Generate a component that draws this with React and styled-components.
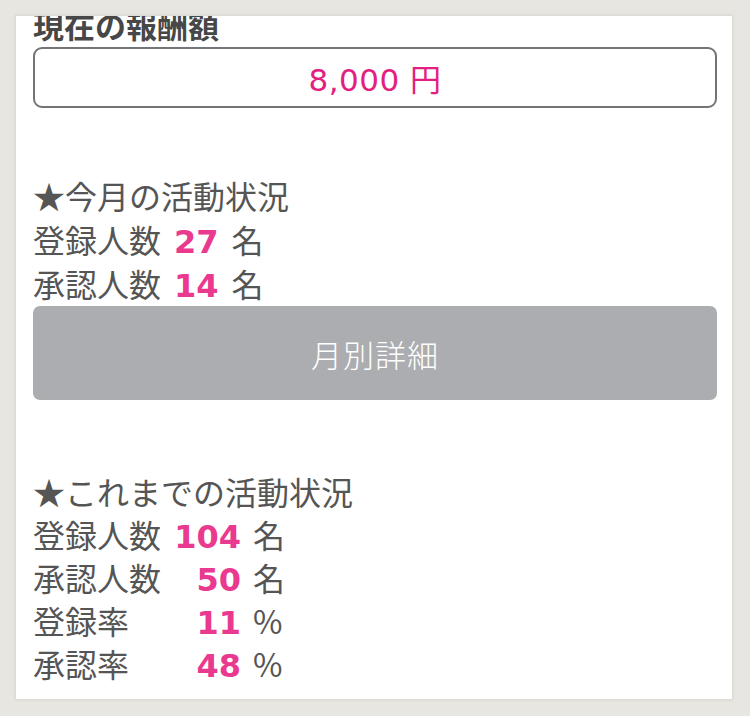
import styled, { createGlobalStyle } from 'styled-components';

const GlobalStyle = createGlobalStyle`
  html, body {
    margin: 0;
    padding: 0;
    background: #e7e6e1;
  }
  body {
    font-family: "Noto Sans CJK JP", "Noto Sans", sans-serif;
  }
`;

const Page = styled.div`
  padding: 15px 17px 16px 15px;
  height: 716px;
  box-sizing: border-box;
`;

const Card = styled.div`
  height: 685px;
  background: #fff;
  border: 1px solid #dedcd8;
  box-shadow: 0 0 3px rgba(0, 0, 0, 0.08);
  overflow: hidden;
  padding: 0 15px 0 17px;
  box-sizing: border-box;
  color: #555;
`;

const Title = styled.h2`
  margin: -14px 0 0;
  font-size: 31px;
  line-height: 45px;
  font-weight: 700;
  color: #474747;
`;

const AmountBox = styled.div`
  height: 61px;
  box-sizing: border-box;
  border: 2px solid #737478;
  border-radius: 9px;
  display: flex;
  align-items: center;
  justify-content: center;
  font-family: "DejaVu Sans", "Noto Sans CJK JP", sans-serif;
  font-size: 31px;
  color: #e3207f;
  letter-spacing: 0.5px;
`;

const Section = styled.section`
  margin-top: ${(p) => p.$top}px;
  font-size: 32px;
  line-height: ${(p) => p.$lh}px;
`;

const Heading = styled.div`
  color: #555;
`;

const Row = styled.div`
  display: flex;
  align-items: baseline;
  gap: ${(p) => p.$gap}px;
`;

const Label = styled.span`
  width: 128px;
  color: #555;
`;

const Value = styled.span`
  font-family: "DejaVu Sans", sans-serif;
  font-weight: 700;
  font-size: 32px;
  line-height: 36px;
  color: #e93a90;
  text-align: right;
  min-width: ${(p) => p.$width || 0}px;
`;

const Unit = styled.span`
  color: #555;
`;

const DetailButton = styled.button`
  display: block;
  width: 100%;
  height: 94px;
  margin-top: 1px;
  border: none;
  border-radius: 7px;
  background: #abadb1;
  color: #fff;
  font-family: inherit;
  font-size: 31px;
  font-weight: 300;
  letter-spacing: 1px;
  cursor: pointer;
`;

const monthly = [
  { label: '登録人数', value: '27', unit: '名' },
  { label: '承認人数', value: '14', unit: '名' },
];

const total = [
  { label: '登録人数', value: '104', unit: '名' },
  { label: '承認人数', value: '50', unit: '名' },
  { label: '登録率', value: '11', unit: '%' },
  { label: '承認率', value: '48', unit: '%' },
];

const App = () => {
  return (
    <>
      <GlobalStyle />
      <Page>
        <Card>
          <Title>現在の報酬額</Title>
          <AmountBox>8,000 円</AmountBox>

          <Section $top={65} $lh={44}>
            <Heading>★今月の活動状況</Heading>
            {monthly.map((r) => (
              <Row key={r.label} $gap={13}>
                <Label>{r.label}</Label>
                <Value>{r.value}</Value>
                <Unit>{r.unit}</Unit>
              </Row>
            ))}
          </Section>
          <DetailButton>月別詳細</DetailButton>

          <Section $top={70} $lh={43}>
            <Heading>★これまでの活動状況</Heading>
            {total.map((r) => (
              <Row key={r.label} $gap={12}>
                <Label>{r.label}</Label>
                <Value $width={68}>{r.value}</Value>
                <Unit>{r.unit}</Unit>
              </Row>
            ))}
          </Section>
        </Card>
      </Page>
    </>
  );
};

export default App;
